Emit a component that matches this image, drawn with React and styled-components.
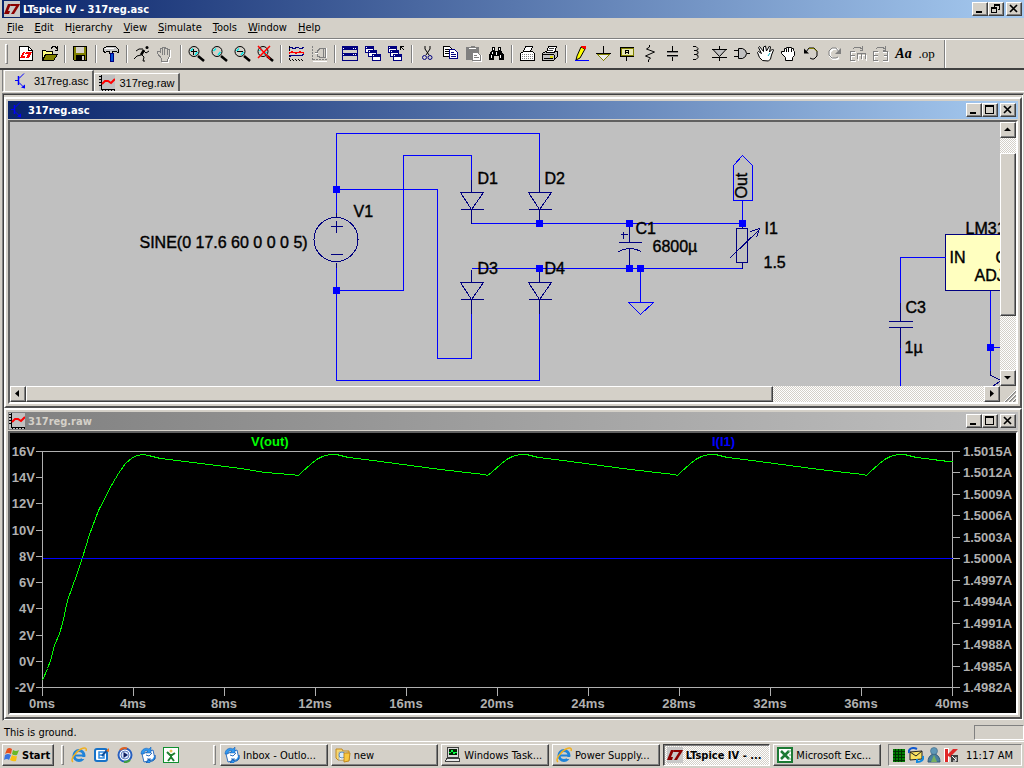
import React from 'react';
import styled, { createGlobalStyle, css } from 'styled-components';

const UI_FONT = "'DejaVu Sans Condensed', 'DejaVu Sans', sans-serif";
const FACE = '#d4d0c8';

/* ---------- logos and small window icons ---------- */

const LogoMark = ({ size = 16, color = '#8b0000', back = '#c8c8c8' }) => (
  <svg width={size} height={size} viewBox="0 0 16 16" aria-hidden="true">
    <rect width="16" height="16" fill={back} />
    <path d="M4 3h3L4 10h2l-1 3H0z" fill={color} />
    <path d="M7 3h9l-1 2-5 8H7l5-8H6z" fill={color} />
  </svg>
);

const TransistorIcon = () => (
  <svg width="16" height="16" viewBox="0 0 16 16" fill="none" stroke="#0000ff" aria-hidden="true">
    <path d="M2 7.500h3M6 5.500L11 0.500M6 9.500l4 4" />
    <path d="M5.500 3v9" strokeWidth="1.500" />
    <path d="M12 15.500v-4l-4 3z" fill="#0000ff" stroke="none" />
  </svg>
);

const WaveIcon = () => (
  <svg width="16" height="16" viewBox="0 0 16 16" fill="none" aria-hidden="true" shapeRendering="crispEdges">
    <rect width="16" height="16" fill="#c0c0c0" />
    <path d="M2.500 0v14.500H16" stroke="#000" />
    <path d="M1 1v12" stroke="#000" strokeWidth="2" strokeDasharray="1 2" />
    <path d="M3 15h13" stroke="#000" strokeWidth="2" strokeDasharray="1 2" />
    <path d="M3 9l3-3h3l3 2 4-4" stroke="#f00" strokeWidth="2" shapeRendering="auto" />
  </svg>
);

const IEIcon = () => (
  <svg width="16" height="16" viewBox="0 0 16 16" fill="none" aria-hidden="true">
    <circle cx="8" cy="8.500" r="5" stroke="#1f83d8" strokeWidth="3" />
    <path d="M4 8.500h9" stroke="#1f83d8" strokeWidth="2" />
    <path d="M10 10h5v2h-4z" fill={FACE} />
    <path d="M2 15C-1 13 4 5 10 2c4-2 6-1 5 2" stroke="#f0b020" strokeWidth="1.500" />
  </svg>
);

const DesktopIcon = () => (
  <svg width="16" height="16" viewBox="0 0 16 16" fill="none" aria-hidden="true">
    <rect x="1" y="2" width="12" height="12" rx="2" fill="#fff" stroke="#1672c8" strokeWidth="2" />
    <path d="M10 5H5v6h5V8M5 8h4" stroke="#2c8ae0" strokeWidth="1.500" />
    <path d="M8 9l5-6" stroke="#0c4f9c" strokeWidth="2" />
    <path d="M12 4l3-3v4z" fill="#f07820" />
  </svg>
);

const MediaIcon = () => (
  <svg width="16" height="16" viewBox="0 0 16 16" fill="none" aria-hidden="true">
    <circle cx="8" cy="8" r="6.500" fill="#fff" stroke="#2860c0" strokeWidth="2" />
    <path d="M3 3a7 7 0 0 1 7-1.500" stroke="#e06020" strokeWidth="2" />
    <path d="M13 13a7 7 0 0 1-6 2" stroke="#40a040" strokeWidth="2" />
    <circle cx="8" cy="8" r="4" fill="#d8e8ff" stroke="#6080c0" />
    <path d="M6.500 5l4.500 3-4.500 3z" fill="#102060" />
  </svg>
);

const OutlookIcon = () => (
  <svg width="16" height="16" viewBox="0 0 16 16" fill="none" aria-hidden="true">
    <path d="M2 7l11-4 2 9-11 3z" fill="#fff" stroke="#3070c0" />
    <path d="M6 8l3 1 3-3M7 12h4" stroke="#3070c0" />
    <path d="M1 7C1 2 6 0 9 2l2-2v6H6l2-2C6 3 4 4 4 7z" fill="#3098f0" stroke="#1058b0" strokeWidth="0.500" />
    <path d="M15 8c1 4-2 7-5 6l-1-2-3 4h4" fill="#3098f0" stroke="#1058b0" />
  </svg>
);

const PersonIcon = () => (
  <svg width="16" height="16" viewBox="0 0 16 16" fill="none" aria-hidden="true">
    <rect x="0.500" y="0.500" width="15" height="15" fill="#fff" stroke="#109030" />
    <circle cx="8" cy="4" r="1.500" fill="#e8c060" />
    <path d="M4 5l3 3h2l3-2M8 7v4M8 10l-3 4M8 10l3 4" stroke="#208030" strokeWidth="2" />
  </svg>
);

const FolderIcon = () => (
  <svg width="16" height="16" viewBox="0 0 16 16" aria-hidden="true">
    <path d="M1 2h6l1 2h6v9H3L1 11z" fill="#f8d870" stroke="#c08820" />
    <path d="M4 5h8v8H4z" fill="#fff" stroke="#b0b0a0" />
    <circle cx="7" cy="8" r="3" fill="#d8ecff" stroke="#6090c0" />
    <path d="M9 6h6l-1 8-5 1z" fill="#f8c840" stroke="#c08820" />
  </svg>
);

const TaskManagerIcon = () => (
  <svg width="16" height="16" viewBox="0 0 16 16" aria-hidden="true" shapeRendering="crispEdges">
    <path d="M2.500 0.500h11v10h-11z" fill="#d8d8d8" stroke="#404040" />
    <rect x="4" y="2" width="8" height="6" fill="#002000" />
    <path d="M4 5h2l1-2 2 4 1-2h2" fill="none" stroke="#00ff40" />
    <path d="M1.500 11.500h13v3H.5z" fill="#e8e8e8" stroke="#404040" />
  </svg>
);

const ExcelIcon = () => (
  <svg width="16" height="16" viewBox="0 0 16 16" fill="none" aria-hidden="true">
    <rect x="1" y="1" width="14" height="14" fill="#fff" stroke="#1c7a34" strokeWidth="2" />
    <path d="M4 4l8 8M12 4l-8 8" stroke="#1c7a34" strokeWidth="2.500" />
    <path d="M11 4h3M12 8h2M11 12h3" stroke="#60b070" />
  </svg>
);

const FlagIcon = () => (
  <svg width="16" height="16" viewBox="0 0 16 16" aria-hidden="true">
    <path d="M3 2q2-2 5 0L7 7Q4 5 1 7z" fill="#e8501c" />
    <path d="M9 3q3 2 6 0l-2 5q-3 1-5-1z" fill="#68b828" />
    <path d="M1 8q3-2 6 0l-2 5q-2-2-5 0z" fill="#3a74e0" />
    <path d="M8 8q3 2 5 1l-1 5q-3 1-6-1z" fill="#f8c010" />
  </svg>
);

const CpuMeterIcon = () => (
  <svg width="12" height="13" viewBox="0 0 12 13" aria-hidden="true" shapeRendering="crispEdges">
    <rect width="12" height="13" fill="#008000" />
    <path d="M0 2.500h12M0 5.500h12M0 8.500h12M0 11.500h12M2.500 0v13M5.500 0v13M8.500 0v13" stroke="#003000" />
  </svg>
);

const MailSyncIcon = () => (
  <svg width="16" height="16" viewBox="0 0 16 16" fill="none" aria-hidden="true">
    <path d="M2 5l12-1v8l-12 1z" fill="#f8e060" stroke="#202020" />
    <path d="M2 5l6 4 6-5" stroke="#202020" />
    <path d="M1 6C0 1 5 0 9 2" stroke="#1058d0" strokeWidth="2" />
    <path d="M15 9c1 4-2 6-6 6M9 12v4" stroke="#1088e0" strokeWidth="2" />
  </svg>
);

const BuddyIcon = () => (
  <svg width="14" height="16" viewBox="0 0 14 16" aria-hidden="true">
    <path d="M1 15q0-6 5-8h2q5 2 5 8z" fill="#4880a0" stroke="#305878" />
    <path d="M7 8l3 7H4z" fill="#78b060" />
    <circle cx="7" cy="4" r="3.500" fill="#6098b8" stroke="#305878" strokeWidth="0.500" />
  </svg>
);

const AntivirusIcon = () => (
  <svg width="14" height="16" viewBox="0 0 14 16" aria-hidden="true">
    <path d="M0 1h5v14H0z" fill="#fff" />
    <path d="M1 2h3v5l5-5h5L8 8l4 3H8L4 9v6H1z" fill="#e02828" />
    <rect x="7" y="8" width="7" height="7" fill="#404040" />
    <path d="M8 9l4 4M12 10v4H9" stroke="#fff" fill="none" />
  </svg>
);

/* ---------- toolbar icons ---------- */

const HAND = 'M7.500 17.500v-3l-4-5v-2h2l1 1v-4h2v-1h3v1h2v1h2v7l-2 3v2z';
const GRAY = '#808080';

const Lens = ({ children }) => (
  <>
    <g shapeRendering="auto">
      <circle cx="9" cy="7.500" r="5" stroke="#000" />
      <path d="M5.500 7L8 4.500M10 11l2.500-3" stroke="#00e8e8" strokeWidth="1.500" />
      <path d="M13 12l6 5" stroke="#000" strokeWidth="2.500" />
    </g>
    {children}
  </>
);

const MiniWindow = ({ x, y }) => (
  <>
    <rect x={x + 0.5} y={y + 0.5} width="8" height="6" fill="#fff" stroke="#000080" />
    <path d={`M${x} ${y + 1.5}h9`} stroke="#000080" strokeWidth="2" />
    <path d={`M${x + 1} ${y + 1.5}h1`} stroke="#fff" />
  </>
);

const TOOL_ICONS = {
  new: (
    <>
      <path d="M4.500 2.500h9l4 4v10h-13z" fill="#fff" />
      <path d="M13.500 2.500v4h4" />
      <path d="M8 8h2l-2 4h2v2H5zM11 8h6l-3 6h-3l2-4h-3z" fill="#f00" stroke="none" />
    </>
  ),
  open: (
    <>
      <path d="M4.500 16.500v-10h3l1 1h6v3" fill="#ffff80" />
      <path d="M4.500 16.500l3-6h12l-4 6z" fill="#808000" />
      <path d="M13 4.500l2-2h2l2 2M19.500 2v4h-3" />
    </>
  ),
  save: (
    <>
      <path d="M4.500 2.500h13v14h-12l-1-1z" fill="#808000" />
      <rect x="7" y="3" width="8" height="6" fill={FACE} stroke="none" />
      <rect x="7" y="11" width="9" height="5" fill="#000" stroke="none" />
      <rect x="13" y="12" width="2" height="4" fill={FACE} stroke="none" />
    </>
  ),
  hammer: (
    <>
      <path d="M3.500 7.500v-3l3-2h9l3 3v3l-3-1h-3v2h-3v-2h-3l-1 1z" fill="#c8c8c8" />
      <path d="M5 4.500h9" stroke="#fff" />
      <path d="M10 9h3v8h-3z" fill="#0050d8" stroke="#000080" />
    </>
  ),
  run: (
    <g shapeRendering="auto">
      <circle cx="16" cy="3.500" r="1.500" fill="#000" stroke="none" />
      <path d="M13 6l-3 5" strokeWidth="2.500" />
      <path d="M12 5H8L5 7M13 7l2 2 3-2M10 11l-4 1-3 3M11 11l2 2-1 4h2" />
    </g>
  ),
  halt: (
    <>
      <path d={HAND} fill="#fff" stroke="#fff" transform="translate(1 1)" />
      <path d={HAND} fill={FACE} stroke={GRAY} />
      <path d="M8.500 4v7M10.500 4v7M13.500 5v6" stroke={GRAY} />
    </>
  ),
  zoomIn: (
    <Lens>
      <path d="M6 7.500h6M8.500 5v6" strokeWidth="1" />
    </Lens>
  ),
  pan: <Lens />,
  zoomOut: (
    <Lens>
      <path d="M6 7.500h6" />
    </Lens>
  ),
  zoomFit: (
    <Lens>
      <path d="M4 2l12 13M16 2L4 14" stroke="#f00" strokeWidth="1.500" shapeRendering="auto" />
    </Lens>
  ),
  autorange: (
    <>
      <path d="M4.500 2v13" strokeDasharray="2 1" />
      <path d="M4 15.500h15M5 16.500h14" strokeDasharray="1 2" />
      <path d="M4 5l2-2 3 2 3-2 4 2 3-2" stroke="#000080" />
      <path d="M4 9l3-1 4 1 4-1 4 1" stroke="#f00" strokeWidth="1.500" />
      <path d="M4 13l3-2 3 1 3-1 3 1 3-2" stroke="#000080" />
    </>
  ),
  fft: (
    <>
      <path d="M4.500 2v14M5 15.500h14" stroke={GRAY} strokeDasharray="2 1" />
      <path d="M9.500 12V7l3-3h5v9h-6zM7 8.500h3M15 4v9" stroke={GRAY} />
      <path d="M18.500 4v10M7 9.500h3M5 17.500h14" stroke="#fff" />
    </>
  ),
  tile: (
    <>
      <rect x="3.500" y="2.500" width="15" height="14" fill={FACE} stroke="#000080" />
      <path d="M3 4h16M3 10h16" stroke="#000080" strokeWidth="3" />
      <path d="M4 4.500h1M14 4.500h4M4 10.500h1M14 10.500h4" stroke="#fff" strokeDasharray="1 1" />
    </>
  ),
  cascade: (
    <>
      <MiniWindow x={3} y={2} />
      <MiniWindow x={6} y={6} />
      <MiniWindow x={10} y={10} />
    </>
  ),
  closeAll: (
    <>
      <MiniWindow x={3} y={2} />
      <MiniWindow x={5} y={6} />
      <MiniWindow x={8} y={10} />
      <path d="M19 6l-3-3M15.500 6V2.500H19" />
    </>
  ),
  cut: (
    <g shapeRendering="auto">
      <path d="M9 2v3l4 6M14 2v3l-4 6" />
      <circle cx="8.500" cy="13.500" r="2" stroke="#000080" />
      <circle cx="14" cy="13.500" r="2" stroke="#000080" />
    </g>
  ),
  copy: (
    <>
      <path d="M4.500 2.500h6l2 2v8h-8z" fill="#fff" />
      <path d="M6 5.500h4M6 7.500h5M6 9.500h5" />
      <path d="M10.500 5.500h5l3 3v6h-8z" fill="#fff" stroke="#000080" />
      <path d="M12 8.500h3M12 10.500h5M12 12.500h5" stroke="#000080" />
    </>
  ),
  paste: (
    <>
      <path d="M4 3h4l1-1h3l1 1h4v13H4z" fill={GRAY} stroke="none" />
      <path d="M7 4.500h7" stroke="#fff" />
      <path d="M10.500 8.500h5l3 3v5h-8z" fill="#fff" stroke={GRAY} />
      <path d="M12 11.500h3M12 13.500h5" stroke={GRAY} />
      <path d="M19.500 11v6.500H11" stroke="#fff" />
    </>
  ),
  find: (
    <>
      <path d="M7 3h3v4h3V3h3v3l3 5v5h-5v-4h-5v4H4v-5l3-5z" fill="#000" stroke="none" />
      <path d="M8.500 4v2M14.500 4v2M6.500 11v3M15.500 11v3M7.500 8v2M11.500 8v3" stroke="#fff" />
    </>
  ),
  printPreview: (
    <>
      <path d="M4.500 16.500v-7l3-2h9l2 2v7z" fill="#fff" />
      <path d="M7.500 7.500l2-5h7l-2 5z" fill="#fff" />
      <path d="M6 10.500h11M6 12.500h11M6 14.500h11" stroke={GRAY} strokeDasharray="1 1" />
    </>
  ),
  print: (
    <>
      <path d="M3.500 9.500l3-2h12v5l-4 4h-11z" fill="#c0c0c0" />
      <path d="M7.500 8.500l2-6h8l-2 6z" fill="#fff" />
      <path d="M10 4.500h5M9 6.500h5" stroke="#404040" />
      <path d="M4 10.500h11M15.500 11v5M5 14.500h9" />
      <path d="M11 12.500h3" stroke="#e0e000" strokeWidth="2" />
    </>
  ),
  wire: (
    <>
      <path d="M7 12l4-9 4 2-5 9-4 2z" fill="#ff0" stroke="#000" shapeRendering="auto" />
      <path d="M11 3l1-1h3v3" stroke="#f00" fill="#f00" />
      <path d="M5 16.500h14" stroke="#0000ff" />
    </>
  ),
  ground: (
    <>
      <path d="M10.500 2v8" />
      <path d="M4.500 10.500h12l-6 6z" fill="#ececec" stroke="#808000" />
      <path d="M3 9.500h15" />
    </>
  ),
  label: (
    <>
      <path d="M4.500 3.500h13v9h-13z" stroke="#000" fill="#e8e8b0" />
      <path d="M5.500 4.500h12v7h-12z" stroke="#808000" />
      <path d="M9.500 10V7l1-1h1l1 1v3M9 8.500h4M10.500 13v4" />
    </>
  ),
  resistor: <path d="M10.500 1v2l-3 2 8 3-9 4 5 2-2 2v2" shapeRendering="auto" />,
  capacitor: (
    <>
      <path d="M10.500 2v5M10.500 12v5M5 7.500h11M5 11.500h11" />
      <path d="M5 8.500h11M5 12.500h11" stroke={GRAY} />
    </>
  ),
  inductor: <path d="M8 2.500h3l2 2v1l-2 1H9h2l2 1v2l-2 1H9h2l2 1v2l-2 2H8" shapeRendering="auto" />,
  diode: (
    <>
      <path d="M5 5.500h13l-6.500 7z" fill="#c0c0c0" shapeRendering="auto" />
      <path d="M11.500 2v3M11.500 13v4M4 5.500h15M4 13.500h15" />
    </>
  ),
  gate: (
    <>
      <path d="M7.500 4.500h4l3 2 1 3-1 3-3 2h-4z" fill="#c0c0c0" shapeRendering="auto" />
      <path d="M3 6.500h4M3 12.500h4M16 9.500h3" />
    </>
  ),
  move: (
    <g shapeRendering="auto">
      <path d="M8.500 16.500l-3-3-2-5 1-1 3 2-3-6 1-1 4 5V3l2-1 1 5 3-5 1 1-1 5 3-3 1 1-2 5-1 4-2 2z" fill="#fff" />
      <path d="M14 12l2-3" stroke="#00b0c0" />
    </g>
  ),
  drag: (
    <>
      <path d="M8.500 16.500v-3l-4-4v-2h3v-3h2v-1h5v1h2v2l1 1v4l-2 2v3z" fill="#fff" shapeRendering="auto" />
      <path d="M9.500 5v3M11.500 4v4M14.500 5v3" />
    </>
  ),
  undo: (
    <g shapeRendering="auto">
      <path d="M6 8l3-4h5l3 3v5l-3 3h-2l-2-1" stroke="#000" />
      <path d="M9 4.500h5l3 3" stroke="#808000" />
      <path d="M4 4.500v5h5z" fill="#000" stroke="none" />
    </g>
  ),
  redo: (
    <g shapeRendering="auto">
      <path d="M17 9l-3-4h-4L7 8v4l3 3h4l2-1" stroke="#fff" strokeWidth="2" />
      <path d="M16 8l-3-4H9L6 7v4l3 3h4l2-1" stroke={GRAY} />
      <path d="M18 4v6h-6z" fill={GRAY} stroke="none" />
    </g>
  ),
  mirror: (
    <>
      <path d="M10 8.500H5v9h5M5 12.500h4M12 17v-6h8v6M16.500 11v5" stroke="#fff" />
      <path d="M9 7.500H4.500v9H9M5 11.500h4M11.500 15v-5.500h8V15M15.500 10v5M7 5l2-2h4l3 2M16.500 2v4h-3" stroke={GRAY} />
    </>
  ),
  rotate: (
    <>
      <path d="M10 8.500H5v9h5M5 12.500h4M14 8.500h5.500v9H14M15 12.500h4" stroke="#fff" />
      <path d="M9 7.500H4.500v9H9M5 11.500h4M14 7.500h4.500v9H14M15 11.500h4M7 5l2-2h4l3 2M16.500 2v4h-3" stroke={GRAY} />
    </>
  ),
};

const TOOL_GROUPS = [
  [['new', 'New schematic'], ['open', 'Open']],
  [['save', 'Save']],
  [['hammer', 'Control panel']],
  [['run', 'Run'], ['halt', 'Halt']],
  [['zoomIn', 'Zoom in'], ['pan', 'Pan'], ['zoomOut', 'Zoom out'], ['zoomFit', 'Zoom to fit']],
  [['autorange', 'Autorange'], ['fft', 'Plot settings']],
  [['tile', 'Tile windows'], ['cascade', 'Cascade windows'], ['closeAll', 'Close all']],
  [['cut', 'Cut'], ['copy', 'Copy'], ['paste', 'Paste'], ['find', 'Find']],
  [['printPreview', 'Print setup'], ['print', 'Print']],
  [
    ['wire', 'Wire'], ['ground', 'Ground'], ['label', 'Label net'], ['resistor', 'Resistor'],
    ['capacitor', 'Capacitor'], ['inductor', 'Inductor'], ['diode', 'Diode'], ['gate', 'Component'],
    ['move', 'Move'], ['drag', 'Drag'], ['undo', 'Undo'], ['redo', 'Redo'],
    ['mirror', 'Mirror'], ['rotate', 'Rotate'],
  ],
];

const MENUS = [
  ['', 'F', 'ile'], ['', 'E', 'dit'], ['H', 'i', 'erarchy'], ['', 'V', 'iew'],
  ['', 'S', 'imulate'], ['', 'T', 'ools'], ['', 'W', 'indow'], ['', 'H', 'elp'],
];

/* ---------- title bars ---------- */

const CaptionButtons = ({ name, restore }) => (
  <Captions>
    <CaptionButton aria-label={`Minimize ${name}`}>
      <svg width="12" height="10" viewBox="0 0 12 10"><path d="M2 8h6" stroke="#000" strokeWidth="2" /></svg>
    </CaptionButton>
    <CaptionButton aria-label={`${restore ? 'Restore' : 'Maximize'} ${name}`}>
      <svg width="12" height="10" viewBox="0 0 12 10" fill="none" stroke="#000" shapeRendering="crispEdges">
        {restore
          ? <path d="M4 1.500h6M4.500 1v3M4 .5h6M9.500 1v5M8 5.500h2M1.500 4v5M1 4.500h6M1 3.500h6M6.500 4v5M1 8.500h6" />
          : <path d="M1 1.500h9M1 .5h9M1.500 1v8M9.500 1v8M1 8.500h9" />}
      </svg>
    </CaptionButton>
    <CaptionButton aria-label={`Close ${name}`} $apart>
      <svg width="12" height="10" viewBox="0 0 12 10"><path d="M2 1l7 7M9 1L2 8" stroke="#000" strokeWidth="1.700" /></svg>
    </CaptionButton>
  </Captions>
);

const ScrollArrow = ({ label, d }) => (
  <ScrollButton aria-label={label}>
    <svg width="12" height="12" viewBox="0 0 12 12" aria-hidden="true"><path d={d} fill="#000" /></svg>
  </ScrollButton>
);

/* ---------- schematic ---------- */

const NODES = [[336, 189], [336, 290], [539, 223], [629, 223], [742, 223], [539, 268], [629, 268], [640, 268], [990, 347]];
const DIODES = [[471, 192], [539, 192], [471, 282], [539, 282]];
const PARTS = [
  ['SINE(0 17.6 60 0 0 0 5)', 139, 247], ['V1', 353, 216], ['D1', 477, 183], ['D2', 544, 183],
  ['D3', 477, 273], ['D4', 544, 273], ['C1', 635, 233], ['6800µ', 652, 251], ['I1', 764, 233],
  ['1.5', 763, 267], ['C3', 905, 312], ['1µ', 904, 352], ['LM317', 965, 233], ['IN', 949, 262],
  ['OUT', 995, 262], ['ADJ', 974, 280],
];

const Schematic = () => (
  <SchematicCanvas viewBox="0 0 990 264" preserveAspectRatio="xMinYMin slice" role="img" aria-label="Schematic">
    <g transform="translate(-9.500 -121.500)" fill="none" shapeRendering="crispEdges">
      <path d="M945 234H1040V290H945z" fill="#ffffc0" stroke="#000080" />
      <g stroke="#0000ff">
        <path d="M336 212V133H539V180M336 189H437V358H471V313M336 290H403V155H471V180" />
        <path d="M336 267V380H539V313M471 223H742M471 268H742M742 223V200" />
        <path d="M742 155L752 165V200H733V165z" />
        <path d="M640 268V302M628 302H653L640 314z" />
        <path d="M945 257H900V302M900 347V390M990 290V370M990 347H1010" />
      </g>
      <g stroke="#000080">
        <circle cx="335.500" cy="239" r="22" />
        <path d="M336 212V217M336 262V267M330 226H342M336 220V232M330 254H342" />
        {DIODES.map(([x, y]) => (
          <path key={`${x}-${y}`} d={`M${x} ${y - 13}V${y}M${x - 11} ${y}H${x + 12}L${x} ${y + 17}zM${x - 11} ${y + 17}H${x + 12}M${x} ${y + 17}V${y + 31}`} />
        ))}
        <path d="M629 223V242M618 242H641M618 251Q629 245 641 251M629 248V268M620 234H627M623 231V238" />
        <path d="M742 223V228M736 228H747V262H736zM742 262V268M730 257L759 229M750 231L759 228L756 237" />
        <path d="M900 302V321M888 321H912M888 327H912M900 327V347" />
        <path d="M990 370V375L1001 380L990 387" />
      </g>
      {NODES.map(([x, y]) => (
        <rect key={`${x}-${y}`} x={x - 3.5} y={y - 3.5} width="7" height="7" fill="#0000ff" />
      ))}
      {PARTS.map(([text, x, y]) => (
        <PartText key={text} x={x} y={y}>{text}</PartText>
      ))}
      <PartText transform="translate(746 198) rotate(-90)">Out</PartText>
    </g>
  </SchematicCanvas>
);

/* ---------- waveform plot ---------- */

const VOLTS = [16, 14, 12, 10, 8, 6, 4, 2, 0, -2];
const AMPS = ['1.5015', '1.5012', '1.5009', '1.5006', '1.5003', '1.5000', '1.4997', '1.4994', '1.4991', '1.4988', '1.4985', '1.4982'];
const TIMES = [0, 4, 8, 12, 16, 20, 24, 28, 32, 36, 40];
const AXIS = { left: 32, right: 942, top: 18, bottom: 254 };

// charge-up, then one ripple cycle per half period of the 60 Hz supply
const CHARGE = [
  [32, 247], [37, 235], [40, 227], [44, 212], [49, 200], [52, 190], [57, 167], [66, 142], [72, 124],
  [79, 101], [88, 77], [102, 50], [108, 40], [115, 30], [122, 24], [127, 22], [133, 21],
  [138, 22], [150, 25], [190, 30], [230, 35], [255, 39], [280, 41], [288, 42],
];
const RIPPLE = [[3, -3], [12, -11], [18, -16], [24, -19], [31, -21], [38, -21], [50, -18], [82, -14], [112, -10], [142, -6], [168, -3], [186, -1], [189, 0]];
const WAVE = [
  ...CHARGE,
  ...[288, 478, 667, 856].flatMap((start) => RIPPLE.map(([dx, dy]) => [start + dx, 42 + dy])),
].filter(([x]) => x <= AXIS.right);
WAVE.push([942, 28]);

const spread = (from, to, i, n) => Math.round(from + ((to - from) * i) / (n - 1));

const Plot = () => (
  <PlotCanvas viewBox="0 0 1006 280" role="img" aria-label="Waveforms">
    <g transform="translate(0.500 0.500)" fill="none" stroke="#b0b0b0" shapeRendering="crispEdges">
      <path d={`M25 ${AXIS.top}H949M25 ${AXIS.bottom}H949M${AXIS.left} ${AXIS.top}V262M${AXIS.right} ${AXIS.top}V262`} />
      {VOLTS.map((v, i) => <path key={v} d={`M25 ${spread(18, 254, i, 10)}h7`} />)}
      {AMPS.map((a, i) => <path key={a} d={`M942 ${spread(18, 254, i, 12)}h7`} />)}
      {TIMES.map((t, i) => <path key={t} d={`M${32 + i * 91} 254v8`} />)}
      <polyline points={WAVE.map((p) => p.join(',')).join(' ')} stroke="#00ff00" />
      <path d="M32 125H942" stroke="#0000ff" />
    </g>
    {VOLTS.map((v, i) => <PlotText key={v} x="25" y={spread(23, 259, i, 10)} textAnchor="end">{v}V</PlotText>)}
    {AMPS.map((a, i) => <PlotText key={a} x="953" y={spread(23, 259, i, 12)}>{a}A</PlotText>)}
    {TIMES.map((t, i) => <PlotText key={t} x={32 + i * 91} y="275" textAnchor="middle">{t}ms</PlotText>)}
    <PlotText x="241" y="13" $color="#00ff00">V(out)</PlotText>
    <PlotText x="702" y="13" $color="#0000ff">I(I1)</PlotText>
  </PlotCanvas>
);

const QUICK_LAUNCH = [
  ['Internet Explorer', <IEIcon />], ['Show Desktop', <DesktopIcon />], ['Media Player', <MediaIcon />],
  ['Outlook Express', <OutlookIcon />], ['Messenger', <PersonIcon />],
];

const TASKS = [
  ['Inbox - Outlo...', <OutlookIcon />],
  ['new', <FolderIcon />],
  ['Windows Task...', <TaskManagerIcon />],
  ['Power Supply...', <IEIcon />],
  ['LTspice IV - ...', <LogoMark />, true],
  ['Microsoft Exc...', <ExcelIcon />],
];

export default function App() {
  return (
    <Desktop>
      <GlobalStyle />
      <AppTitle>
        <LogoMark />
        <TitleText>LTspice IV - 317reg.asc</TitleText>
        <CaptionButtons name="LTspice IV" restore />
      </AppTitle>

      <MenuBar>
        {MENUS.map(([before, key, after]) => (
          <MenuButton key={after}>{before}<u>{key}</u>{after}</MenuButton>
        ))}
      </MenuBar>

      <Toolbar>
        <Grip />
        {TOOL_GROUPS.map((group, i) => (
          <ToolGroup key={group[0][0]} $first={i === 0}>
            {group.map(([id, label]) => (
              <ToolButton key={id} aria-label={label}>
                <svg width="23" height="20" viewBox="0 0 23 20" fill="none" stroke="#000" shapeRendering="crispEdges">
                  {TOOL_ICONS[id]}
                </svg>
              </ToolButton>
            ))}
          </ToolGroup>
        ))}
        <ToolButton $italic>Aa</ToolButton>
        <ToolButton>.op</ToolButton>
        <ToolbarEnd />
      </Toolbar>

      <TabStrip>
        <Tab $active><TransistorIcon />317reg.asc</Tab>
        <Tab><WaveIcon />317reg.raw</Tab>
      </TabStrip>

      <Workspace>
        <ChildWindow>
          <ChildTitle $active>
            <TransistorIcon />
            <TitleText>317reg.asc</TitleText>
            <CaptionButtons name="317reg.asc" />
          </ChildTitle>
          <Client>
            <ClientRow>
              <Schematic />
              <VerticalScroll>
                <ScrollArrow label="Scroll up" d="M2 7h7L5.500 3.500z" />
                <VerticalTrack><VerticalThumb /></VerticalTrack>
                <ScrollArrow label="Scroll down" d="M2 4h7L5.500 7.500z" />
              </VerticalScroll>
            </ClientRow>
            <ClientRow>
              <ScrollArrow label="Scroll left" d="M7 2v7L3 5.500z" />
              <HorizontalTrack><HorizontalThumb /></HorizontalTrack>
              <ScrollArrow label="Scroll right" d="M4 2v7L8 5.500z" />
              <svg width="16" height="16" viewBox="0 0 16 16" stroke={GRAY} strokeWidth="1.500">
                <path d="M5 16L16 5M9 16l7-7M13 16l3-3" />
                <path d="M4 16L16 4M8 16l8-8M12 16l4-4" stroke="#fff" strokeWidth="1" />
              </svg>
            </ClientRow>
          </Client>
        </ChildWindow>
        <ChildWindow $grow>
          <ChildTitle>
            <WaveIcon />
            <TitleText>317reg.raw</TitleText>
            <CaptionButtons name="317reg.raw" />
          </ChildTitle>
          <Client $dark>
            <Plot />
          </Client>
        </ChildWindow>
      </Workspace>

      <StatusBar>
        <span>This is ground.</span>
        <StatusPanel />
      </StatusBar>

      <Taskbar>
        <StartButton><FlagIcon />Start</StartButton>
        <QuickLaunch>
          <Grip />
          {QUICK_LAUNCH.map(([label, icon]) => (
            <QuickButton key={label} aria-label={label}>{icon}</QuickButton>
          ))}
        </QuickLaunch>
        <Grip />
        <TaskList>
          {TASKS.map(([label, icon, active]) => (
            <TaskButton key={label} $active={active}>{icon}<span>{label}</span></TaskButton>
          ))}
        </TaskList>
        <Tray>
          <CpuMeterIcon />
          <MailSyncIcon />
          <BuddyIcon />
          <AntivirusIcon />
          <Clock>11:17 AM</Clock>
        </Tray>
      </Taskbar>
    </Desktop>
  );
}

/* ---------- styles ---------- */

const GlobalStyle = createGlobalStyle`
  *,
  *::before {
    box-sizing: border-box;
  }
  body {
    margin: 0;
    background: ${FACE};
    color: #000;
    font: 11px ${UI_FONT};
  }
  button {
    margin: 0;
    padding: 0;
    border: 0;
    background: none;
    color: inherit;
    font: inherit;
  }
  svg {
    display: block;
    flex: none;
  }
`;

const raised = css`
  border: 1px solid;
  border-color: #fff #404040 #404040 #fff;
  box-shadow: inset -1px -1px 0 #808080;
  background: ${FACE};
`;

const dither = css`
  background: repeating-conic-gradient(#fff 0 25%, ${FACE} 0 50%) 0 0 / 2px 2px;
`;

const Desktop = styled.div`
  display: flex;
  flex-direction: column;
  min-height: 100vh;
`;

const titleBar = css`
  display: flex;
  align-items: center;
  height: 18px;
  padding: 0 2px;
  gap: 3px;
  font-weight: bold;
`;

const AppTitle = styled.header`
  ${titleBar}
  margin-left: 2px;
  color: #fff;
  background: linear-gradient(to right, #0a246a, #a6caf0);
`;

const ChildTitle = styled.header`
  ${titleBar}
  padding-left: 1px;
  margin-bottom: 1px;
  color: ${({ $active }) => ($active ? '#fff' : FACE)};
  background: ${({ $active }) => ($active
    ? 'linear-gradient(to right, #0a246a, #a6caf0)'
    : 'linear-gradient(to right, #808080, #c0c0c0)')};
`;

const TitleText = styled.span`
  flex: 1;
  white-space: nowrap;
`;

const Captions = styled.div`
  display: flex;
`;

const CaptionButton = styled.button`
  ${raised}
  width: 16px;
  height: 14px;
  padding: 1px;
  margin-left: ${({ $apart }) => ($apart ? '2px' : '0')};
`;

const MenuBar = styled.nav`
  display: flex;
  align-items: center;
  gap: 11px;
  height: 21px;
  padding: 0 7px;
  border-bottom: 1px solid #808080;
`;

const MenuButton = styled.button`
  line-height: 16px;
`;

const Toolbar = styled.div`
  display: flex;
  align-items: center;
  height: 31px;
  padding-left: 5px;
  border-top: 1px solid #fff;
  border-bottom: 2px solid #404040;
`;

const Grip = styled.div`
  width: 3px;
  height: 20px;
  border: 1px solid;
  border-color: #fff #808080 #808080 #fff;
`;

const ToolGroup = styled.div`
  display: flex;
  align-items: center;
  margin-left: ${({ $first }) => ($first ? '7px' : '0')};

  ${({ $first }) => !$first && css`
    &::before {
      content: '';
      width: 2px;
      height: 18px;
      margin: 0 3px;
      border-left: 1px solid #808080;
      border-right: 1px solid #fff;
    }
  `}
`;

const ToolButton = styled.button`
  width: 23px;
  height: 22px;
  font: ${({ $italic }) => ($italic ? 'italic bold 14px' : '13px')} 'Liberation Serif', serif;
`;

const ToolbarEnd = styled.div`
  align-self: stretch;
  width: 2px;
  margin-left: 6px;
  border-left: 1px solid #808080;
  border-right: 1px solid #fff;
`;

const TabStrip = styled.div`
  display: flex;
  align-items: flex-end;
  height: 22px;
  margin-left: 2px;
  padding-left: 1px;
  border-left: 1px solid #808080;
  border-bottom: 1px solid #fff;
`;

const Tab = styled.button`
  display: flex;
  align-items: center;
  gap: ${({ $active }) => ($active ? '5px' : '4px')};
  height: ${({ $active }) => ($active ? '21px' : '18px')};
  padding: 0 4px 0 ${({ $active }) => ($active ? '8px' : '4px')};
  border: solid;
  border-width: 1px 2px 0 1px;
  border-color: #fff #606060 #fff #fff;
  font-family: 'Liberation Sans', sans-serif;
`;

const Workspace = styled.main`
  display: flex;
  flex: 1;
  flex-direction: column;
  margin: 1px 0 0 2px;
  padding: 3px 1px 1px;
  border: 1px solid;
  border-color: #808080 ${FACE} ${FACE} #808080;
  box-shadow: inset 1px 1px 0 #404040, inset -1px -1px 0 #fff;
`;

const ChildWindow = styled.section`
  flex: ${({ $grow }) => ($grow ? '1' : 'none')};
  padding: 2px;
  border: 2px solid;
  border-color: #fff #505050 #505050 #fff;
`;

const Client = styled.div`
  border: 2px solid;
  border-color: #606060 #fff #fff #606060;
  background: ${({ $dark }) => ($dark ? '#000' : FACE)};
`;

const ClientRow = styled.div`
  display: flex;
`;

const SchematicCanvas = styled.svg`
  flex: 1;
  min-width: 0;
  height: 264px;
  background: #c0c0c0;
`;

const PartText = styled.text`
  font: 16px 'Liberation Sans', sans-serif;
  fill: #000;
  stroke: #000;
  stroke-width: 0.4px;
`;

const PlotCanvas = styled.svg`
  width: 100%;
`;

const PlotText = styled.text`
  font: bold 13px 'Liberation Sans', sans-serif;
  fill: ${({ $color }) => $color || '#b0b0b0'};
`;

const ScrollButton = styled.button`
  ${raised}
  flex: none;
  width: 16px;
  height: 16px;
  padding: 1px;
`;

const VerticalScroll = styled.div`
  display: flex;
  flex-direction: column;
`;

const VerticalTrack = styled.div`
  ${dither}
  flex: 1;
  padding-top: 15px;
`;

const VerticalThumb = styled.div`
  ${raised}
  height: 75%;
`;

const HorizontalTrack = styled.div`
  ${dither}
  flex: 1;
`;

const HorizontalThumb = styled.div`
  ${raised}
  width: 78%;
  height: 16px;
`;

const StatusBar = styled.footer`
  display: flex;
  align-items: center;
  justify-content: space-between;
  height: 20px;
  padding: 2px 0 0 4px;
`;

const StatusPanel = styled.div`
  width: 50px;
  height: 15px;
  border: 1px solid;
  border-color: #808080 #fff #fff #808080;
`;

const Taskbar = styled.footer`
  display: flex;
  align-items: center;
  height: 27px;
  padding: 0 2px;
  border-top: 1px solid #fff;
`;

const StartButton = styled.button`
  ${raised}
  display: flex;
  align-items: center;
  gap: 2px;
  width: 52px;
  height: 22px;
  padding-left: 1px;
  font-weight: bold;
`;

const QuickLaunch = styled.div`
  display: flex;
  align-items: center;
  gap: 7px;
  width: 152px;
  margin-left: 7px;
`;

const QuickButton = styled.button`
  width: 16px;
  height: 16px;
`;

const TaskList = styled.div`
  display: flex;
  flex: 1;
  gap: 3px;
  margin: 0 7px 0 4px;
`;

const TaskButton = styled.button`
  ${raised}
  display: flex;
  flex: 1;
  align-items: center;
  gap: 3px;
  min-width: 0;
  height: 22px;
  padding: 0 3px;
  white-space: nowrap;
  ${({ $active }) => $active && css`
    ${dither}
    border-color: #404040 #fff #fff #404040;
    box-shadow: inset 1px 1px 0 #808080;
    font-weight: bold;
  `}
`;

const Tray = styled.div`
  display: flex;
  align-items: center;
  gap: 3px;
  height: 22px;
  padding: 0 8px 0 4px;
  border: 1px solid;
  border-color: #808080 #fff #fff #808080;
`;

const Clock = styled.time`
  margin-left: 5px;
`;
